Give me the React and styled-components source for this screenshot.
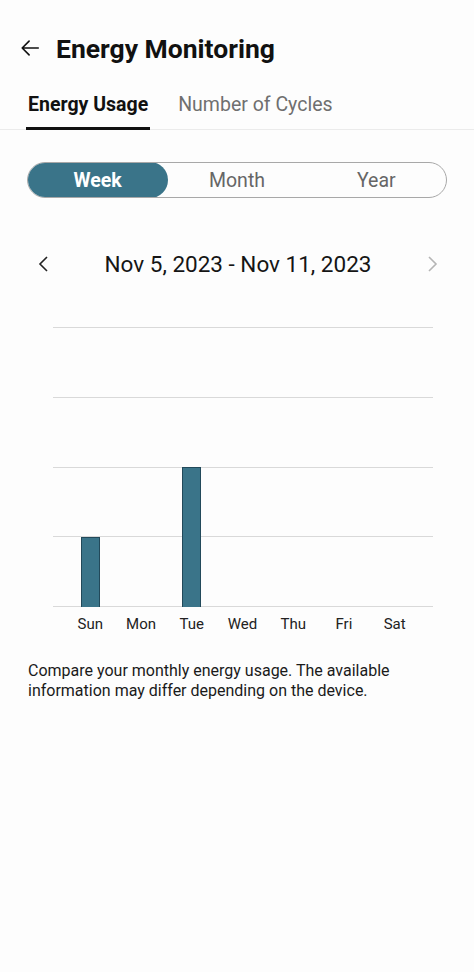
import React, { useState } from "react";
import styled, { createGlobalStyle } from "styled-components";

const GlobalStyle = createGlobalStyle`
  html, body {
    margin: 0;
    padding: 0;
    background: #fdfdfd;
  }
  body {
    font-family: Roboto, "Noto Sans", "Liberation Sans", sans-serif;
    color: #111;
  }
`;

const days = [
  { label: "Sun", value: 1 },
  { label: "Mon", value: 0 },
  { label: "Tue", value: 2 },
  { label: "Wed", value: 0 },
  { label: "Thu", value: 0 },
  { label: "Fri", value: 0 },
  { label: "Sat", value: 0 },
];
const maxValue = 4;
const chartHeight = 280;

export default function App() {
  const [tab, setTab] = useState(0);
  const [range, setRange] = useState("Week");

  return (
    <Page>
      <GlobalStyle />
      <Header>
        <BackButton aria-label="Back">
          <svg width="22" height="22" viewBox="0 0 24 24" fill="none">
            <path
              d="M21 12H3.5M11 4.5L3.5 12l7.5 7.5"
              stroke="#111"
              strokeWidth="1.8"
              strokeLinecap="round"
              strokeLinejoin="round"
            />
          </svg>
        </BackButton>
        <Title>Energy Monitoring</Title>
      </Header>

      <Tabs>
        {["Energy Usage", "Number of Cycles"].map((t, i) => (
          <Tab key={t} $active={tab === i} onClick={() => setTab(i)}>
            {t}
          </Tab>
        ))}
      </Tabs>

      <Content>
        <Segmented>
          {["Week", "Month", "Year"].map((r) => (
            <Segment key={r} $active={range === r} onClick={() => setRange(r)}>
              {r}
            </Segment>
          ))}
        </Segmented>

        <DateNav>
          <NavArrow $dim={false} aria-label="Previous">
            <svg width="14" height="18" viewBox="0 0 14 18" fill="none">
              <path d="M10 2L3 9l7 7" stroke="#222" strokeWidth="1.6" />
            </svg>
          </NavArrow>
          <DateLabel>Nov 5, 2023 - Nov 11, 2023</DateLabel>
          <NavArrow $dim aria-label="Next">
            <svg width="14" height="18" viewBox="0 0 14 18" fill="none">
              <path d="M4 2l7 7-7 7" stroke="#b5b5b5" strokeWidth="1.6" />
            </svg>
          </NavArrow>
        </DateNav>

        <Chart>
          <Plot>
            <GridLines>
              {[0, 1, 2, 3, 4].map((g) => (
                <GridLine key={g} />
              ))}
            </GridLines>
            <Bars>
              {days.map((d) => (
                <BarSlot key={d.label}>
                  {d.value > 0 && (
                    <Bar style={{ height: (d.value / maxValue) * chartHeight }} />
                  )}
                </BarSlot>
              ))}
            </Bars>
          </Plot>
          <Labels>
            {days.map((d) => (
              <DayLabel key={d.label}>{d.label}</DayLabel>
            ))}
          </Labels>
        </Chart>

        <Note>
          Compare your monthly energy usage. The available information may
          differ depending on the device.
        </Note>
      </Content>
    </Page>
  );
}

const Page = styled.div`
  width: 474px;
  min-height: 972px;
  background: #fdfdfd;
`;

const Header = styled.div`
  display: flex;
  align-items: center;
  height: 48px;
  padding: 24px 0 0 18px;
  gap: 14px;
`;

const BackButton = styled.button`
  border: none;
  background: none;
  padding: 0;
  width: 24px;
  height: 24px;
  display: flex;
  align-items: center;
  justify-content: center;
  cursor: pointer;
`;

const Title = styled.h1`
  margin: 0;
  font-size: 26.5px;
  font-weight: 700;
  color: #111;
`;

const Tabs = styled.div`
  display: flex;
  gap: 26px;
  padding: 0 0 0 26px;
  margin-top: 9px;
  border-bottom: 1px solid #ebebeb;
`;

const Tab = styled.button`
  border: none;
  background: none;
  padding: 12px 2px 11px;
  font-family: inherit;
  font-size: 19.5px;
  font-weight: ${(p) => (p.$active ? 700 : 400)};
  color: ${(p) => (p.$active ? "#111" : "#6f6f6f")};
  border-bottom: 3px solid ${(p) => (p.$active ? "#111" : "transparent")};
  margin-bottom: -1px;
  cursor: pointer;
`;

const Content = styled.div`
  padding: 32px 27px 0;
`;

const Segmented = styled.div`
  display: grid;
  grid-template-columns: repeat(3, 1fr);
  height: 36px;
  border: 1px solid #a8a8a8;
  border-radius: 18px;
  box-sizing: border-box;
  overflow: hidden;
`;

const Segment = styled.button`
  border: none;
  font-family: inherit;
  font-size: 19.5px;
  font-weight: ${(p) => (p.$active ? 700 : 400)};
  color: ${(p) => (p.$active ? "#fff" : "#666")};
  background: ${(p) => (p.$active ? "#3a7489" : "transparent")};
  border-radius: 18px;
  margin: -1px;
  cursor: pointer;
`;

const DateNav = styled.div`
  display: flex;
  align-items: center;
  justify-content: space-between;
  margin-top: 51px;
  padding: 0 8px 0 10px;
  height: 30px;
`;

const NavArrow = styled.button`
  border: none;
  background: none;
  padding: 0;
  display: flex;
  cursor: ${(p) => (p.$dim ? "default" : "pointer")};
`;

const DateLabel = styled.div`
  font-size: 22.5px;
  color: #151515;
`;

const Chart = styled.div`
  margin: 47px 14px 0 26px;
`;

const Plot = styled.div`
  position: relative;
  height: ${chartHeight}px;
  border-top: 1px solid transparent;
`;

const GridLines = styled.div`
  position: absolute;
  inset: 0;
  display: flex;
  flex-direction: column;
  justify-content: space-between;
`;

const GridLine = styled.div`
  height: 1px;
  background: #d9d9d9;
`;

const Bars = styled.div`
  position: absolute;
  inset: 0 0 0 12px;
  width: 355px;
  display: grid;
  grid-template-columns: repeat(7, 1fr);
  align-items: end;
`;

const BarSlot = styled.div`
  display: flex;
  justify-content: center;
  align-items: flex-end;
  height: 100%;
`;

const Bar = styled.div`
  width: 19px;
  box-sizing: border-box;
  background: #3a7489;
  border: 1px solid #22495a;
  border-bottom: none;
`;

const Labels = styled.div`
  display: grid;
  grid-template-columns: repeat(7, 1fr);
  width: 355px;
  margin-left: 12px;
  padding-top: 8px;
`;

const DayLabel = styled.div`
  text-align: center;
  font-size: 15px;
  color: #222;
`;

const Note = styled.p`
  margin: 28px 0 0 1px;
  font-size: 16px;
  line-height: 20px;
  color: #1a1a1a;
`;
